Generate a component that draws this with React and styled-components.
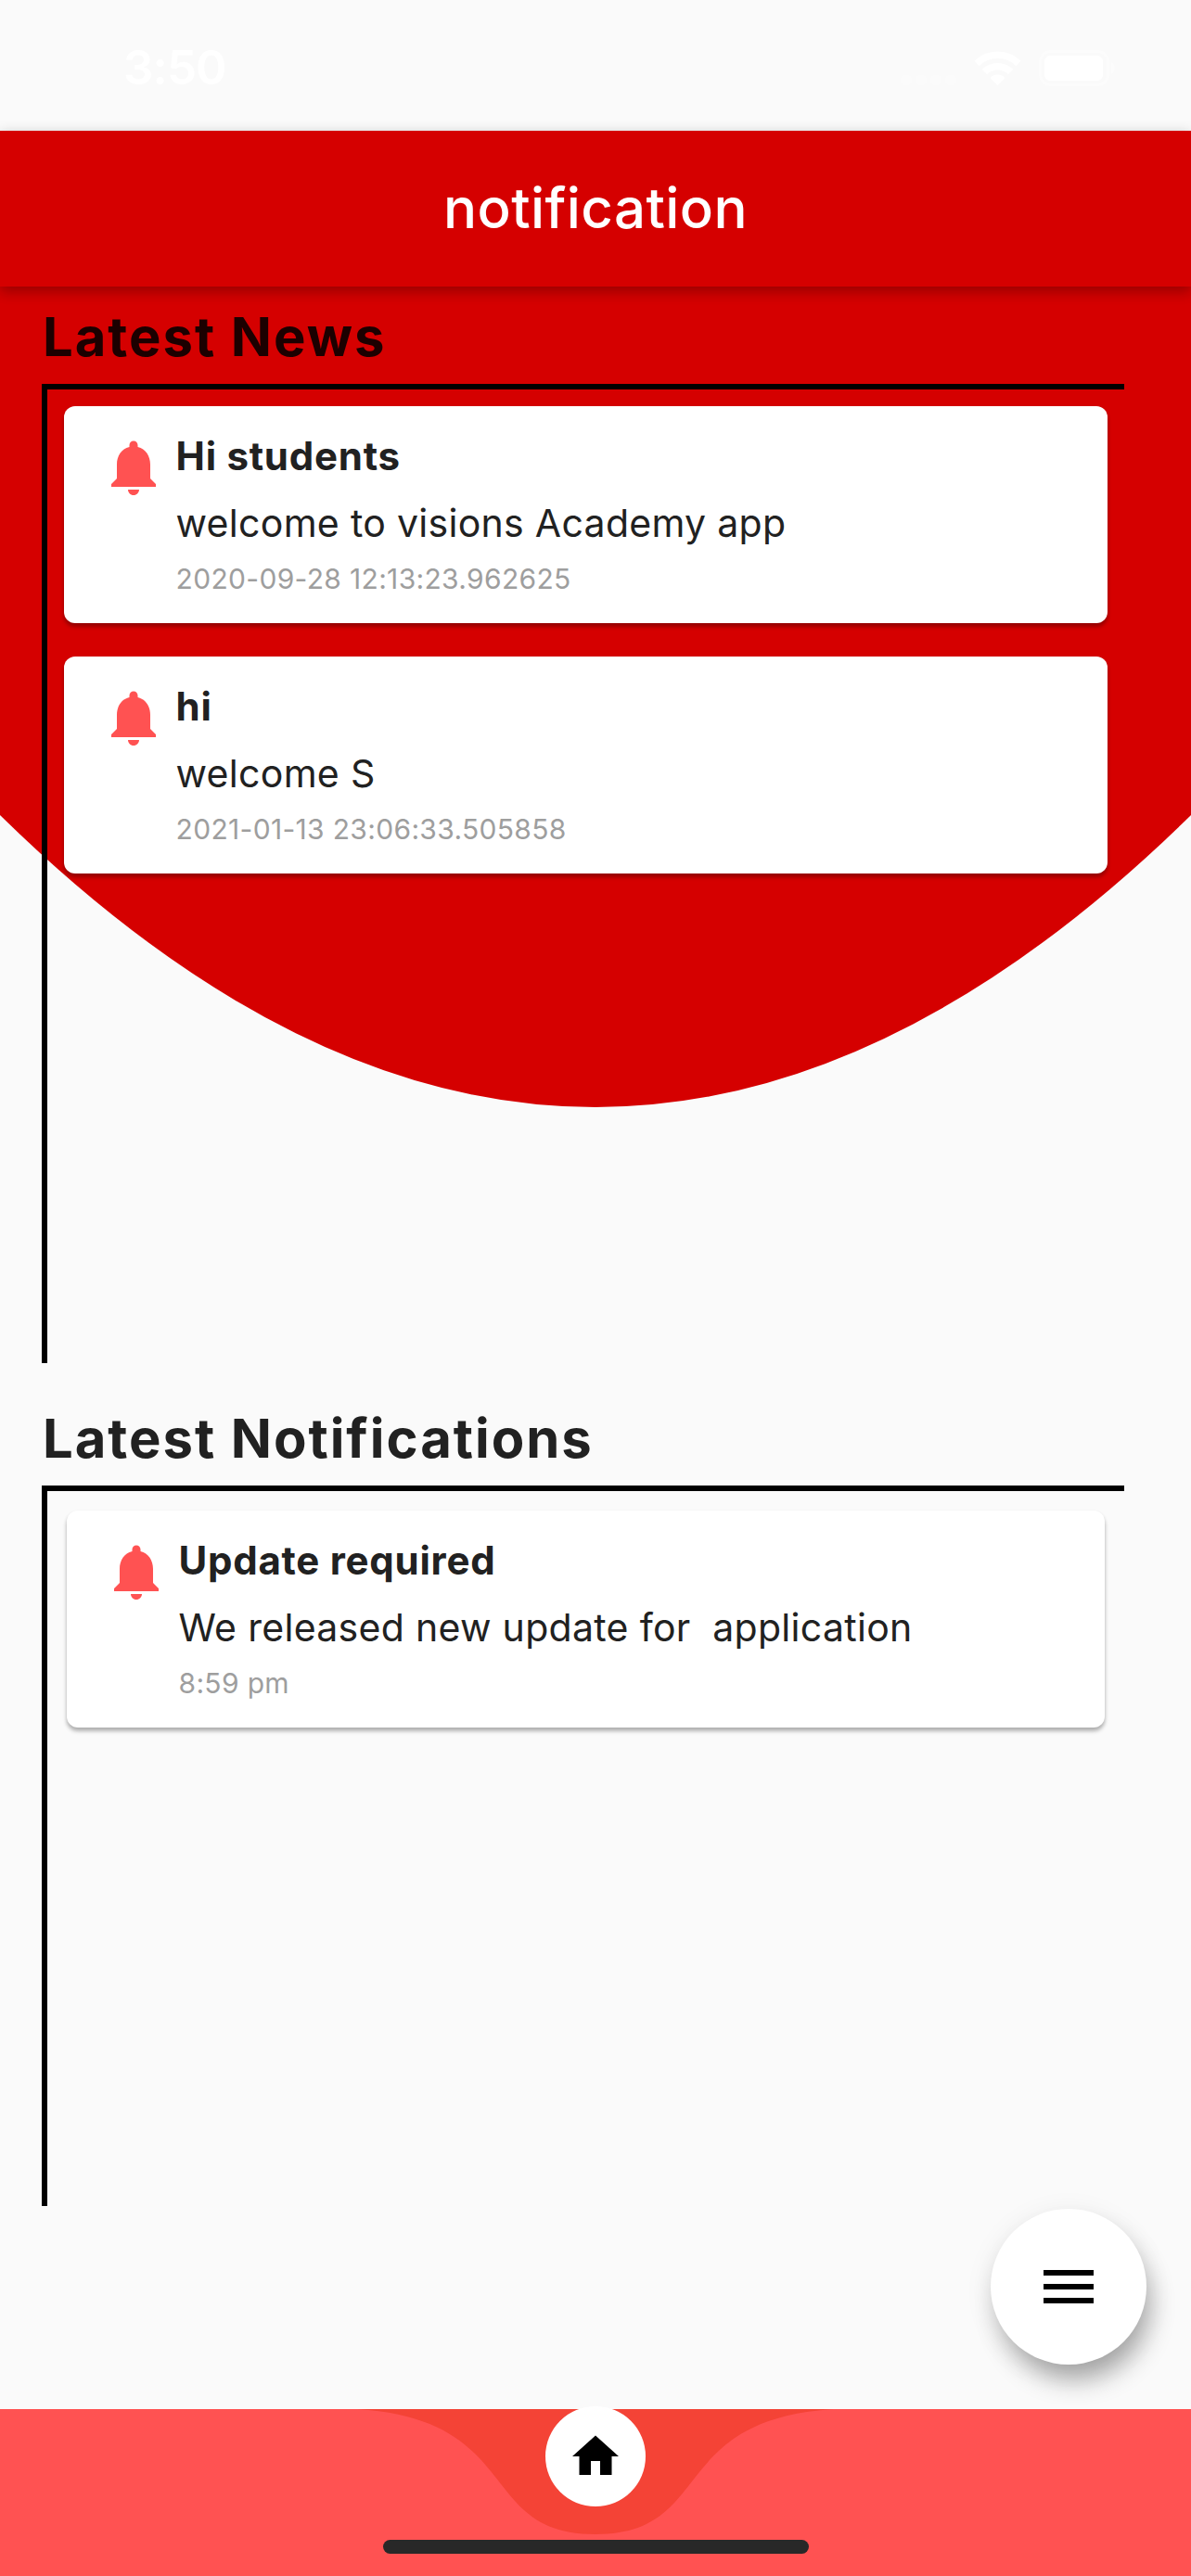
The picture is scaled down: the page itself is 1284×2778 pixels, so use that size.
import React from "react";
import styled, { createGlobalStyle } from "styled-components";

const GlobalStyle = createGlobalStyle`
  *, *::before, *::after { box-sizing: border-box; }
  body {
    margin: 0;
    background: #fafafa;
    font-family: Inter, "Liberation Sans", sans-serif;
    color: #212121;
  }
`;

const Screen = styled.div`
  position: relative;
  display: flex;
  flex-direction: column;
  width: 1284px;
  height: 2778px;
  overflow: hidden;
  background: #fafafa;
`;

const StatusBar = styled.div`
  display: flex;
  justify-content: space-between;
  flex: none;
  height: 141px;
  padding: 45px 82px 0 133px;
  color: #fff;
`;

const Clock = styled.span`
  font-size: 51px;
  line-height: 56px;
  font-weight: 600;
  letter-spacing: -0.9px;
`;

const Indicators = styled.div`
  display: flex;
  align-items: center;
  gap: 19px;
  height: 56px;
`;

const AppBar = styled.header`
  position: relative;
  z-index: 2;
  display: flex;
  flex: none;
  align-items: center;
  justify-content: center;
  height: 168px;
  padding-bottom: 2px;
  background: #d50000;
  box-shadow: 0 4px 14px rgba(0, 0, 0, 0.24), 0 8px 14px rgba(0, 0, 0, 0.08);
`;

const AppTitle = styled.h1`
  margin: 0;
  color: #fff;
  font-size: 60px;
  line-height: 70px;
  font-weight: 500;
  letter-spacing: 0.4px;
`;

const Content = styled.main`
  position: relative;
  flex: 1;
  padding: 18px 72px 0 45px;
`;

const Backdrop = styled.svg`
  position: absolute;
  top: 0;
  left: 0;
  width: 1284px;
  height: 886px;
`;

const Section = styled.section`
  position: relative;
  display: flex;
  flex-direction: column;
  margin-bottom: ${(p) => p.$after}px;
`;

const Heading = styled.h2`
  margin: 0;
  height: 87px;
  padding-left: 1px;
  color: rgba(0, 0, 0, 0.87);
  font-size: 58px;
  line-height: 72px;
  font-weight: 700;
  letter-spacing: 1.95px;
`;

const Frame = styled.div`
  display: flex;
  flex-direction: column;
  gap: 36px;
  height: ${(p) => p.$height}px;
  padding: ${(p) => p.$pad};
  border-top: 6px solid #000;
  border-left: 6px solid #000;
`;

const Card = styled.article`
  display: flex;
  flex: none;
  gap: 9.5px;
  height: 234px;
  padding: 30px 39px;
  border-radius: 12px;
  background: #fff;
  box-shadow: 0 4px 4px rgba(0, 0, 0, 0.26), 0 2px 4px rgba(0, 0, 0, 0.08);
`;

const BellIcon = styled.svg`
  flex: none;
  width: 72px;
  height: 72px;
  fill: #ff5252;
`;

const CardText = styled.div`
  display: flex;
  flex-direction: column;
  white-space: pre;
`;

const CardTitle = styled.strong`
  height: 72px;
  font-size: 42px;
  line-height: 48px;
  font-weight: 700;
  letter-spacing: 0.75px;
`;

const CardBody = styled.span`
  height: 68px;
  font-size: 41px;
  line-height: 50px;
  font-weight: 400;
  letter-spacing: 0.3px;
`;

const CardDate = styled.time`
  font-size: 30px;
  line-height: 36px;
  color: #9e9e9e;
  letter-spacing: 0.33px;
`;

const Fab = styled.button`
  position: absolute;
  right: 48px;
  bottom: 228px;
  display: flex;
  align-items: center;
  justify-content: center;
  width: 168px;
  height: 168px;
  padding: 0;
  border: 0;
  border-radius: 50%;
  background: #fff;
  box-shadow: 7px 20px 28px -4px rgba(0, 0, 0, 0.32), 0 6px 30px rgba(0, 0, 0, 0.08);
`;

const NavBar = styled.nav`
  position: relative;
  display: flex;
  flex: none;
  flex-direction: column;
  align-items: center;
  height: 180px;
  background: #ff5252;
`;

const Notch = styled.svg`
  position: absolute;
  top: 0;
  left: 0;
  width: 1284px;
  height: 180px;
`;

const HomeButton = styled.button`
  position: relative;
  display: flex;
  align-items: center;
  justify-content: center;
  width: 108px;
  height: 108px;
  margin: -3px 0 36px;
  padding: 0;
  border: 0;
  border-radius: 50%;
  background: #fff;
`;

const HomeIndicator = styled.div`
  position: relative;
  width: 459px;
  height: 15px;
  border-radius: 8px;
  background: #282828;
`;

const news = [
  { title: "Hi students", body: "welcome to visions Academy app", date: "2020-09-28 12:13:23.962625" },
  { title: "hi", body: "welcome S", date: "2021-01-13 23:06:33.505858" },
];

const notifications = [
  { title: "Update required", body: "We released new update for  application", date: "8:59 pm" },
];

function NoticeCard({ title, body, date }) {
  return (
    <Card>
      <BellIcon viewBox="0 0 24 24">
        <path d="M12 22c1.1 0 2-.9 2-2h-4c0 1.1.89 2 2 2zm6-6v-5c0-3.07-1.64-5.64-4.5-6.32V4c0-.83-.67-1.5-1.5-1.5s-1.5.67-1.5 1.5v.68C7.63 5.36 6 7.92 6 11v5l-2 2v1h16v-1l-2-2z" />
      </BellIcon>
      <CardText>
        <CardTitle>{title}</CardTitle>
        <CardBody>{body}</CardBody>
        <CardDate>{date}</CardDate>
      </CardText>
    </Card>
  );
}

export default function App() {
  return (
    <>
      <GlobalStyle />
      <Screen>
        <StatusBar>
          <Clock>3:50</Clock>
          <Indicators>
            <svg width="60" height="37" viewBox="0 0 60 37" fill="#fff" fillOpacity="0.3">
              <circle cx="6" cy="31.500" r="6" />
              <circle cx="22" cy="31.500" r="6" />
              <circle cx="38" cy="31.500" r="6" />
              <circle cx="54" cy="31.500" r="6" />
            </svg>
            <svg width="51" height="37" viewBox="0 0 51 37" fill="none" stroke="#fff" strokeWidth="7.500">
              <path d="M3 13.500a32 32 0 0 1 45 0M11.500 22.500a20 20 0 0 1 28 0" />
              <path d="M25.500 37l-8-8a11 11 0 0 1 16 0z" fill="#fff" stroke="none" />
            </svg>
            <svg width="82" height="39" viewBox="0 0 82 39">
              <rect x="1.500" y="1.500" width="73" height="36" rx="11" fill="none" stroke="#fff" strokeOpacity="0.4" strokeWidth="3" />
              <rect x="6" y="6" width="63" height="27" rx="6" fill="#fff" />
              <path d="M78 13c5 2 5 11 0 13z" fill="#fff" fillOpacity="0.4" />
            </svg>
          </Indicators>
        </StatusBar>
        <AppBar>
          <AppTitle>notification</AppTitle>
        </AppBar>
        <Content>
          <Backdrop viewBox="0 0 1284 886">
            <path d="M0 0V570Q642 1200 1284 570V0z" fill="#d50000" />
          </Backdrop>
          <Section $after={45}>
            <Heading>Latest News</Heading>
            <Frame $height={1056} $pad="18px 18px 0">
              {news.map((n) => (
                <NoticeCard key={n.date} {...n} />
              ))}
            </Frame>
          </Section>
          <Section $after={0}>
            <Heading>Latest Notifications</Heading>
            <Frame $height={777} $pad="21px 21px 0">
              {notifications.map((n) => (
                <NoticeCard key={n.date} {...n} />
              ))}
            </Frame>
          </Section>
        </Content>
        <NavBar>
          <Notch viewBox="0 0 1284 180">
            <path
              d="M385.200 0C565 11.250 513.600 135 642 135S718.800 11.250 898.800 0z"
              fill="#f44336"
            />
          </Notch>
          <HomeButton aria-label="Home">
            <svg width="60" height="60" viewBox="0 0 24 24">
              <path d="M10 20v-6h4v6h5v-8h3L12 3 2 12h3v8z" />
            </svg>
          </HomeButton>
          <HomeIndicator />
        </NavBar>
        <Fab aria-label="Menu">
          <svg width="72" height="72" viewBox="0 0 24 24">
            <path d="M3 18h18v-2H3v2zm0-5h18v-2H3v2zm0-7v2h18V6H3z" />
          </svg>
        </Fab>
      </Screen>
    </>
  );
}
